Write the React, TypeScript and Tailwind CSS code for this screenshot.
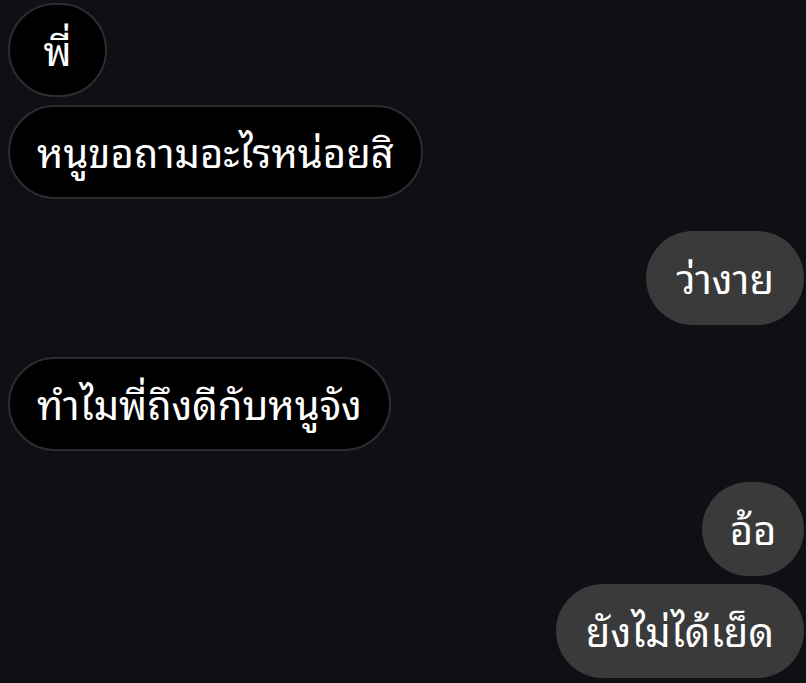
const messages = [
  { text: "พี่", mine: false, gap: "mt-0", round: true },
  { text: "หนูขอถามอะไรหน่อยสิ", mine: false, gap: "mt-2" },
  { text: "ว่างาย", mine: true, gap: "mt-8" },
  { text: "ทำไมพี่ถึงดีกับหนูจัง", mine: false, gap: "mt-8" },
  { text: "อ้อ", mine: true, gap: "mt-[31px]", round: true },
  { text: "ยังไม่ได้เย็ด", mine: true, gap: "mt-2" },
];

const Bubble = ({ text, mine, gap, round }: { text: string; mine: boolean; gap: string; round?: boolean }) => {
  const size = round ? (mine ? "w-[102px]" : "w-[99px]") : mine ? "px-[30px]" : "px-[27px]";
  return (
    <div className={`flex ${mine ? "justify-end" : "justify-start"} ${gap}`}>
      <div
        className={`h-[94px] flex items-center justify-center rounded-full text-white text-[40px] leading-none ${size} ${
          mine ? "bg-[#3a3a3a]" : "bg-black border-2 border-[#2c2d31]"
        }`}
      >
        <span className="pb-1">{text}</span>
      </div>
    </div>
  );
};

export default function App() {
  return (
    <div className="w-[806px] h-[683px] overflow-hidden bg-[#0e1015] pt-[3px] pl-2 pr-[2px] font-['Noto_Sans_Thai_Looped','Noto_Sans',sans-serif]">
      {messages.map((m, i) => (
        <Bubble key={i} {...m} />
      ))}
    </div>
  );
}
